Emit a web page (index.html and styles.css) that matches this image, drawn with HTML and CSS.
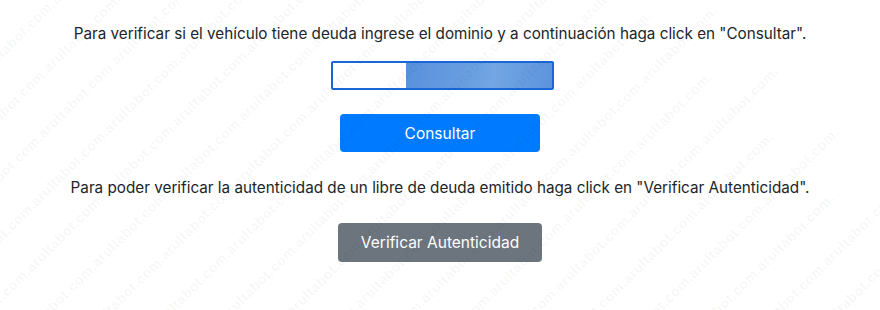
FILE: index.html
```html
<!DOCTYPE html>
<html lang="es">
<head>
<meta charset="utf-8">
<link rel="stylesheet" href="styles.css">
</head>
<body>
<main class="page">
  <p class="msg">Para verificar si el vehículo tiene deuda ingrese el dominio y a continuación haga click en "Consultar".</p>
  <div class="field"><span class="field-empty"></span><span class="field-blur"></span></div>
  <button class="btn btn-primary">Consultar</button>
  <p class="msg msg-2">Para poder verificar la autenticidad de un libre de deuda emitido haga click en "Verificar Autenticidad".</p>
  <button class="btn btn-secondary">Verificar Autenticidad</button>
</main>
<div class="watermark" aria-hidden="true">
  <div class="wm-inner">
    <div>arultabot.com.arultabot.com.arultabot.com.arultabot.com.arultabot.com.arultabot.com.arultabot.com.arultabot.com.arultabot.com.arultabot.com.arultabot.com.</div>
    <div>ot.com.arultabot.com.arultabot.com.arultabot.com.arultabot.com.arultabot.com.arultabot.com.arultabot.com.arultabot.com.arultabot.com.arultabot.com.</div>
    <div>arultabot.com.arultabot.com.arultabot.com.arultabot.com.arultabot.com.arultabot.com.arultabot.com.arultabot.com.arultabot.com.arultabot.com.arultabot.com.</div>
    <div>ot.com.arultabot.com.arultabot.com.arultabot.com.arultabot.com.arultabot.com.arultabot.com.arultabot.com.arultabot.com.arultabot.com.arultabot.com.</div>
    <div>arultabot.com.arultabot.com.arultabot.com.arultabot.com.arultabot.com.arultabot.com.arultabot.com.arultabot.com.arultabot.com.arultabot.com.arultabot.com.</div>
    <div>ot.com.arultabot.com.arultabot.com.arultabot.com.arultabot.com.arultabot.com.arultabot.com.arultabot.com.arultabot.com.arultabot.com.arultabot.com.</div>
    <div>arultabot.com.arultabot.com.arultabot.com.arultabot.com.arultabot.com.arultabot.com.arultabot.com.arultabot.com.arultabot.com.arultabot.com.arultabot.com.</div>
    <div>ot.com.arultabot.com.arultabot.com.arultabot.com.arultabot.com.arultabot.com.arultabot.com.arultabot.com.arultabot.com.arultabot.com.arultabot.com.</div>
    <div>arultabot.com.arultabot.com.arultabot.com.arultabot.com.arultabot.com.arultabot.com.arultabot.com.arultabot.com.arultabot.com.arultabot.com.arultabot.com.</div>
    <div>ot.com.arultabot.com.arultabot.com.arultabot.com.arultabot.com.arultabot.com.arultabot.com.arultabot.com.arultabot.com.arultabot.com.arultabot.com.</div>
    <div>arultabot.com.arultabot.com.arultabot.com.arultabot.com.arultabot.com.arultabot.com.arultabot.com.arultabot.com.arultabot.com.arultabot.com.arultabot.com.</div>
    <div>ot.com.arultabot.com.arultabot.com.arultabot.com.arultabot.com.arultabot.com.arultabot.com.arultabot.com.arultabot.com.arultabot.com.arultabot.com.</div>
    <div>arultabot.com.arultabot.com.arultabot.com.arultabot.com.arultabot.com.arultabot.com.arultabot.com.arultabot.com.arultabot.com.arultabot.com.arultabot.com.</div>
    <div>ot.com.arultabot.com.arultabot.com.arultabot.com.arultabot.com.arultabot.com.arultabot.com.arultabot.com.arultabot.com.arultabot.com.arultabot.com.</div>
    <div>arultabot.com.arultabot.com.arultabot.com.arultabot.com.arultabot.com.arultabot.com.arultabot.com.arultabot.com.arultabot.com.arultabot.com.arultabot.com.</div>
    <div>ot.com.arultabot.com.arultabot.com.arultabot.com.arultabot.com.arultabot.com.arultabot.com.arultabot.com.arultabot.com.arultabot.com.arultabot.com.</div>
    <div>arultabot.com.arultabot.com.arultabot.com.arultabot.com.arultabot.com.arultabot.com.arultabot.com.arultabot.com.arultabot.com.arultabot.com.arultabot.com.</div>
    <div>ot.com.arultabot.com.arultabot.com.arultabot.com.arultabot.com.arultabot.com.arultabot.com.arultabot.com.arultabot.com.arultabot.com.arultabot.com.</div>
    <div>arultabot.com.arultabot.com.arultabot.com.arultabot.com.arultabot.com.arultabot.com.arultabot.com.arultabot.com.arultabot.com.arultabot.com.arultabot.com.</div>
    <div>ot.com.arultabot.com.arultabot.com.arultabot.com.arultabot.com.arultabot.com.arultabot.com.arultabot.com.arultabot.com.arultabot.com.arultabot.com.</div>
    <div>arultabot.com.arultabot.com.arultabot.com.arultabot.com.arultabot.com.arultabot.com.arultabot.com.arultabot.com.arultabot.com.arultabot.com.arultabot.com.</div>
  </div>
</div>
</body>
</html>
```
FILE: styles.css
```css
html, body { margin: 0; padding: 0; background: #fff; }
body {
  font-family: Inter, "Liberation Sans", sans-serif;
  font-size: 15.25px;
  color: #212529;
  position: relative;
  min-height: 310px;
  overflow: hidden;
}
.page {
  display: flex;
  flex-direction: column;
  align-items: center;
  padding-top: 24px;
}
.msg { margin: 0; line-height: 20px; text-align: center; }
.field {
  margin-top: 17px;
  margin-left: 5px;
  width: 219px;
  height: 25px;
  border: 2px solid #1a66d6;
  border-radius: 2px;
  display: flex;
  overflow: hidden;
}
.field-empty { width: 73px; background: #fff; }
.field-blur {
  flex: 1;
  background: linear-gradient(100deg, #5890dc 0%, #6a9fe0 45%, #72a6e4 60%, #5c93dc 100%);
}
.btn {
  font: inherit;
  font-size: 15.5px;
  color: #fff;
  border: none;
  border-radius: 4px;
  cursor: pointer;
}
.btn-primary {
  margin-top: 24px;
  width: 200px;
  height: 38px;
  background: #007bff;
}
.msg-2 { margin-top: 26px; }
.btn-secondary {
  margin-top: 25px;
  width: 204px;
  height: 39px;
  background: #6c757d;
}
.watermark {
  position: absolute;
  inset: 0;
  overflow: hidden;
  pointer-events: none;
}
.wm-inner {
  position: absolute;
  left: -400px;
  top: -300px;
  width: 1700px;
  transform: rotate(-45deg);
  transform-origin: 850px 450px;
  font-family: "Liberation Sans", Arial, sans-serif;
  font-weight: bold;
  font-size: 14px;
  letter-spacing: 0.5px;
  line-height: 43px;
  white-space: nowrap;
  color: rgba(0, 0, 0, 0.045);
}
```
